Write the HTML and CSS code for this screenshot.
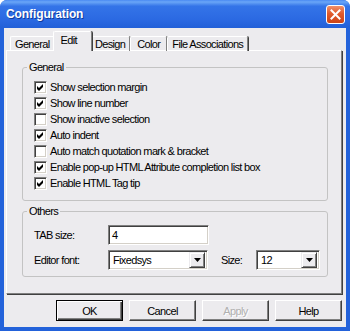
FILE: index.html
```html
<!DOCTYPE html>
<html lang="en">
<head>
  <meta charset="UTF-8" />
  <title>Configuration</title>
  <link rel="stylesheet" href="styles.css">
</head>
<body>
  <div class="window">
    <div class="titlebar">
      <span class="title">Configuration</span>
      <button class="close">
        <svg width="11" height="11" viewBox="0 0 11 11">
          <path d="M1.5 1.5 L9.5 9.5 M9.5 1.5 L1.5 9.5" stroke="#fff" stroke-width="2" stroke-linecap="square"/>
        </svg>
      </button>
    </div>

    <div class="client">
      <div class="tabs">
        <div class="tab">General</div>
        <div class="tab active">Edit</div>
        <div class="tab">Design</div>
        <div class="tab wide">Color</div>
        <div class="tab">File Associations</div>
      </div>

      <div class="panel">
        <fieldset class="group general">
          <legend>General</legend>
          <label class="check"><span class="box"><svg width="9" height="9" viewBox="0 0 9 9"><path d="M1 3 L3 5 L7 1 L7 4 L3 8 L1 6 Z"/></svg></span>Show selection margin</label>
          <label class="check"><span class="box"><svg width="9" height="9" viewBox="0 0 9 9"><path d="M1 3 L3 5 L7 1 L7 4 L3 8 L1 6 Z"/></svg></span>Show line number</label>
          <label class="check"><span class="box"></span>Show inactive selection</label>
          <label class="check"><span class="box"><svg width="9" height="9" viewBox="0 0 9 9"><path d="M1 3 L3 5 L7 1 L7 4 L3 8 L1 6 Z"/></svg></span>Auto indent</label>
          <label class="check"><span class="box"></span>Auto match quotation mark &amp; bracket</label>
          <label class="check"><span class="box"><svg width="9" height="9" viewBox="0 0 9 9"><path d="M1 3 L3 5 L7 1 L7 4 L3 8 L1 6 Z"/></svg></span>Enable pop-up HTML Attribute completion list box</label>
          <label class="check"><span class="box"><svg width="9" height="9" viewBox="0 0 9 9"><path d="M1 3 L3 5 L7 1 L7 4 L3 8 L1 6 Z"/></svg></span>Enable HTML Tag tip</label>
        </fieldset>

        <fieldset class="group others">
          <legend>Others</legend>
          <div class="field-row">
            <span class="field-label">TAB size:</span>
            <div class="textbox tab-size">4</div>
          </div>
          <div class="field-row">
            <span class="field-label">Editor font:</span>
            <div class="combo font-combo">
              <span class="combo-value">Fixedsys</span>
              <span class="drop"><svg width="7" height="4" viewBox="0 0 7 4"><path d="M0 0 H7 L3.5 4 Z"/></svg></span>
            </div>
            <span class="size-label">Size:</span>
            <div class="combo size-combo">
              <span class="combo-value">12</span>
              <span class="drop"><svg width="7" height="4" viewBox="0 0 7 4"><path d="M0 0 H7 L3.5 4 Z"/></svg></span>
            </div>
          </div>
        </fieldset>
      </div>

      <div class="buttons">
        <button class="btn default">OK</button>
        <button class="btn">Cancel</button>
        <button class="btn" disabled>Apply</button>
        <button class="btn">Help</button>
      </div>
    </div>
  </div>
</body>
</html>
```

FILE: styles.css
```css
body {
  margin: 0;
  font-family: "Liberation Sans", Arial, sans-serif;
  font-size: 11px;
  letter-spacing: -0.65px;
  color: #000;
}
.window {
  width: 350px;
  height: 331px;
  box-sizing: border-box;
  padding: 0 4px 4px;
  display: flex;
  flex-direction: column;
  background: #2362da;
  border-radius: 7px 7px 0 0;
}
.titlebar {
  height: 28px;
  margin: 0 -4px;
  padding: 0 5px 0 6px;
  display: flex;
  align-items: center;
  justify-content: space-between;
  border-radius: 7px 7px 0 0;
  background: linear-gradient(to bottom, #4a8af2 0%, #6aa6f7 7%, #3474e8 22%, #2b69e2 70%, #2260d8 100%);
}
.title {
  color: #fff;
  font-weight: bold;
  font-size: 12px;
  letter-spacing: -0.1px;
  text-shadow: 1px 1px 0 #0f3a9c;
}
.close {
  width: 19px;
  height: 19px;
  padding: 0;
  margin-top: 1px;
  display: flex;
  align-items: center;
  justify-content: center;
  border: 1px solid #fff;
  border-radius: 3px;
  background: linear-gradient(to bottom, #f0906a, #e05a2c 45%, #cc4417);
}
.client {
  flex: 1;
  display: flex;
  flex-direction: column;
  padding: 4px 4px 5px 2px;
  background: #ecebee;
}
.tabs {
  height: 19px;
  padding-left: 4px;
  display: flex;
  align-items: flex-end;
  margin-bottom: -1px;
  position: relative;
  z-index: 1;
}
.tab {
  height: 14px;
  padding: 0 4px;
  line-height: 14px;
  border: 1px solid;
  border-color: #fff #808080 transparent #fff;
  border-bottom: none;
  border-radius: 2px 2px 0 0;
  box-shadow: 1px 0 0 #404040;
}
.tab.wide {
  padding: 0 6px;
}
.tab.active {
  height: 19px;
  line-height: 16px;
  padding: 0 14px 0 7px;
  margin: 0 -2px;
  position: relative;
  background: #ecebee;
}
.panel {
  height: 244px;
  box-sizing: border-box;
  padding: 10px 13px 0 15px;
  border: 1px solid;
  border-color: #fff #808080 #808080 #fff;
  box-shadow: 1px 1px 0 #404040;
}
.group {
  margin: 0;
  border: 1px solid #c3c3c3;
  border-radius: 3px;
}
.group legend {
  padding: 0 2px;
  margin-left: -7px;
  line-height: 13px;
}
.general {
  padding: 5px 0 9px 11px;
}
.others {
  margin-top: 4px;
  padding: 7px 0 6px 11px;
}
.check {
  height: 16px;
  display: flex;
  align-items: center;
  gap: 3px;
  white-space: nowrap;
}
.box {
  width: 13px;
  height: 13px;
  box-sizing: border-box;
  display: flex;
  align-items: center;
  justify-content: center;
  background: #fff;
  border: 1px solid;
  border-color: #808080 #fff #fff #808080;
  box-shadow: inset 1px 1px 0 #404040, inset -1px -1px 0 #d4d0c8;
}
.field-row {
  height: 20px;
  display: flex;
  align-items: center;
}
.field-row + .field-row {
  margin-top: 5px;
}
.field-label {
  width: 74px;
}
.textbox,
.combo {
  height: 20px;
  box-sizing: border-box;
  background: #fff;
  border: 1px solid;
  border-color: #808080 #fff #fff #808080;
  box-shadow: inset 1px 1px 0 #404040, inset -1px -1px 0 #d4d0c8;
}
.textbox {
  width: 101px;
  padding: 3px 0 0 3px;
}
.combo {
  display: flex;
  align-items: center;
  padding: 2px;
}
.font-combo {
  width: 100px;
}
.size-combo {
  width: 64px;
}
.combo-value {
  flex: 1;
  padding-left: 2px;
}
.drop {
  width: 16px;
  height: 16px;
  box-sizing: border-box;
  display: flex;
  align-items: center;
  justify-content: center;
  background: #ecebee;
  border: 1px solid;
  border-color: #ecebee #404040 #404040 #ecebee;
  box-shadow: inset 1px 1px 0 #fff, inset -1px -1px 0 #808080;
}
.size-label {
  width: 35px;
  margin-left: 13px;
}
.buttons {
  margin-top: 6px;
  display: flex;
  justify-content: flex-end;
  gap: 6px;
}
.btn {
  width: 67px;
  height: 21px;
  padding: 0;
  font-family: inherit;
  font-size: 11px;
  letter-spacing: inherit;
  color: #000;
  background: #ecebee;
  border: 1px solid;
  border-color: #fff #404040 #404040 #fff;
  box-shadow: inset -1px -1px 0 #808080;
}
.btn.default {
  border-color: #000;
  box-shadow: inset 1px 1px 0 #fff, inset -1px -1px 0 #404040, inset -2px -2px 0 #808080;
}
.btn:disabled {
  color: #b0b0b0;
  text-shadow: 1px 1px 0 #fff;
}
```
